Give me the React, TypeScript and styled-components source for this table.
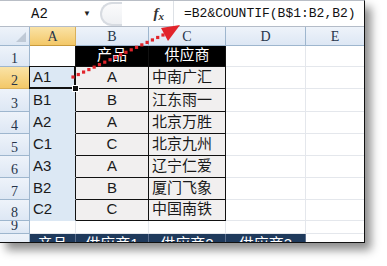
import styled, { createGlobalStyle } from "styled-components";

const GlobalStyle = createGlobalStyle`
  html, body {
    margin: 0;
    padding: 0;
    background: #fff;
  }
  body {
    font-family: "Liberation Sans", "Noto Sans CJK SC", sans-serif;
  }
`;

type Row = { n: number; a: string; b: string; c: string; head?: boolean };

const rows: Row[] = [
  { n: 1, a: "", b: "产品", c: "供应商", head: true },
  { n: 2, a: "A1", b: "A", c: "中南广汇" },
  { n: 3, a: "B1", b: "B", c: "江东雨一" },
  { n: 4, a: "A2", b: "A", c: "北京万胜" },
  { n: 5, a: "C1", b: "C", c: "北京九州" },
  { n: 6, a: "A3", b: "A", c: "辽宁仁爱" },
  { n: 7, a: "B2", b: "B", c: "厦门飞象" },
  { n: 8, a: "C2", b: "C", c: "中国南铁" },
];

const columns = ["A", "B", "C", "D", "E"];
const summary = ["产品", "供应商1", "供应商2", "供应商3"];

// 红色虚线箭头: 从 A2 指向编辑栏
const arrowDots = () => {
  const dots = [];
  const x0 = 73, y0 = 76, x1 = 163, y1 = 34;
  const len = Math.hypot(x1 - x0, y1 - y0);
  const steps = Math.floor(len / 5.6);
  for (let i = 0; i <= steps; i++) {
    const t = i / steps;
    dots.push(
      <rect
        key={i}
        x={x0 + (x1 - x0) * t - 1.6}
        y={y0 + (y1 - y0) * t - 1.6}
        width={3.2}
        height={3.2}
        fill="#e2242b"
      />
    );
  }
  return dots;
};

const App = () => {
  return (
    <Page>
      <GlobalStyle />
      <Window>
        <FormulaBar>
          <NameBox>
            <NameText>A2</NameText>
            <DropArrow>▼</DropArrow>
          </NameBox>
          <Splitter />
          <FxButton>
            <i>f</i>
            <small>x</small>
          </FxButton>
          <FormulaText>=B2&amp;COUNTIF(B$1:B2,B2)</FormulaText>
        </FormulaBar>

        <Sheet>
          <Corner>
            <CornerMark />
          </Corner>
          {columns.map((c) => (
            <ColHead key={c} $active={c === "A"}>
              {c}
            </ColHead>
          ))}

          {rows.map((r) => (
            <RowGroup key={r.n} row={r} />
          ))}

          <RowHead $active={false}>9</RowHead>
          <Cell $tone="blank" />
          <Cell $tone="blank" />
          <Cell $tone="blank" />
          <Cell $tone="blank" />
          <Cell $tone="blank" />

          <RowHead $active={false}>10</RowHead>
          {summary.map((s) => (
            <Cell key={s} $tone="navy" $align="center">
              {s}
            </Cell>
          ))}
          <Cell $tone="blank" />
        </Sheet>

        <Overlay viewBox="0 0 366 244">
          {arrowDots()}
          <polygon points="180,24 161,27 168,40" fill="#e2242b" />
        </Overlay>
      </Window>
    </Page>
  );
};

const RowGroup = ({ row }: { row: Row }) => {
  const selected = row.n === 2;
  return (
    <>
      <RowHead $active={selected}>{row.n}</RowHead>
      <Cell
        $tone={row.n === 1 ? "blank" : "key"}
        $edge
        $selected={selected}
      >
        {row.a}
      </Cell>
      <Cell $tone={row.head ? "head" : "data"} $align="center">
        {row.b}
      </Cell>
      <Cell $tone={row.head ? "head" : "data"} $align={row.head ? "center" : "left"}>
        {row.c}
      </Cell>
      <Cell $tone="blank" />
      <Cell $tone="blank" />
    </>
  );
};

export default App;

const Page = styled.div`
  width: 387px;
  height: 266px;
  background: #fff;
  overflow: hidden;
`;

const Window = styled.div`
  position: relative;
  width: 365px;
  height: 243px;
  border-top: 1px solid #b9bec6;
  border-right: 1px solid #111;
  border-bottom: 1px solid #111;
  box-sizing: border-box;
  background: #fff;
  overflow: hidden;
  box-shadow: 6px 7px 9px rgba(0, 0, 0, 0.45);
`;

const FormulaBar = styled.div`
  height: 25px;
  display: flex;
  align-items: center;
  border-bottom: 1px solid #b4bcc8;
  background: #fff;
`;

const NameBox = styled.div`
  width: 96px;
  height: 100%;
  display: flex;
  align-items: center;
  padding-left: 31px;
  box-sizing: border-box;
`;

const NameText = styled.span`
  font-family: "Liberation Mono", monospace;
  font-size: 14px;
  color: #111;
  flex: 1;
`;

const DropArrow = styled.span`
  font-size: 8px;
  color: #222;
  margin-right: 5px;
`;

const Splitter = styled.div`
  width: 20px;
  height: 20px;
  margin-left: 4px;
  border: 2px solid #d7dbe1;
  border-right: none;
  border-radius: 12px 0 0 12px;
  background: linear-gradient(#fbfbfc, #eef0f3);
`;

const FxButton = styled.div`
  width: 52px;
  height: 100%;
  display: flex;
  align-items: center;
  justify-content: flex-end;
  padding-right: 9px;
  box-sizing: border-box;
  border-right: 1px solid #dde1e6;
  font-family: "Liberation Serif", serif;
  font-weight: bold;
  color: #333;

  i {
    font-size: 15px;
  }
  small {
    font-size: 11px;
    font-style: italic;
    margin-top: 4px;
  }
`;

const FormulaText = styled.div`
  padding-left: 10px;
  font-family: "Liberation Mono", monospace;
  font-size: 13px;
  color: #111;
  white-space: nowrap;
`;

const Sheet = styled.div`
  display: grid;
  grid-template-columns: 30px 46px 73px 77px 80px 59px;
  grid-template-rows: 19px 21px 22px 23px 22px 22px 22px 22px 21px 13px 22px;
`;

const headBg = "linear-gradient(#eef3fa, #dde7f4)";
const activeBg = "linear-gradient(#fae3a6, #f3c868)";

const Corner = styled.div`
  position: relative;
  background: ${headBg};
  border-right: 1px solid #9eb6ce;
  border-bottom: 1px solid #9eb6ce;
`;

const CornerMark = styled.div`
  position: absolute;
  right: 3px;
  bottom: 3px;
  width: 0;
  height: 0;
  border-left: 10px solid transparent;
  border-bottom: 10px solid #bfc9d6;
`;

const ColHead = styled.div<{ $active: boolean }>`
  display: flex;
  align-items: center;
  justify-content: center;
  padding-top: 2px;
  box-sizing: border-box;
  background: ${(p) => (p.$active ? activeBg : headBg)};
  border-right: 1px solid ${(p) => (p.$active ? "#d9b05a" : "#9eb6ce")};
  border-bottom: 1px solid ${(p) => (p.$active ? "#c89a3c" : "#9eb6ce")};
  font-family: "Liberation Serif", serif;
  font-size: 14px;
  color: #27354a;
`;

const RowHead = styled.div<{ $active: boolean }>`
  display: flex;
  align-items: flex-end;
  justify-content: center;
  padding-bottom: 1px;
  box-sizing: border-box;
  background: ${(p) => (p.$active ? activeBg : headBg)};
  border-right: 1px solid ${(p) => (p.$active ? "#c89a3c" : "#9eb6ce")};
  border-bottom: 1px solid ${(p) => (p.$active ? "#d9b05a" : "#9eb6ce")};
  font-family: "Liberation Serif", serif;
  font-size: 14px;
  line-height: 12px;
  color: #27354a;
  overflow: hidden;
`;

type Tone = "blank" | "key" | "data" | "head" | "navy";

const toneBg: Record<Tone, string> = {
  blank: "#fff",
  key: "#dce8f4",
  data: "#f1efef",
  head: "#000",
  navy: "#1f3a5c",
};

const toneLine: Record<Tone, string> = {
  blank: "#e4e7ec",
  key: "#dce8f4",
  data: "#111",
  head: "#111",
  navy: "#5b6f8e",
};

const Cell = styled.div<{
  $tone: Tone;
  $align?: "left" | "center";
  $edge?: boolean;
  $selected?: boolean;
}>`
  position: relative;
  display: flex;
  align-items: flex-end;
  justify-content: ${(p) => (p.$align === "center" ? "center" : "flex-start")};
  padding: 0 0 2px ${(p) => (p.$align === "center" ? "0" : "3px")};
  box-sizing: border-box;
  background: ${(p) => toneBg[p.$tone]};
  border-right: 1px solid ${(p) => (p.$edge ? "#111" : toneLine[p.$tone])};
  border-bottom: 1px solid ${(p) => toneLine[p.$tone]};
  font-size: 15px;
  line-height: 18px;
  color: ${(p) => (p.$tone === "head" || p.$tone === "navy" ? "#fff" : "#1a1a1a")};
  white-space: nowrap;

  ${(p) =>
    p.$selected &&
    `
    &::after {
      content: "";
      position: absolute;
      left: -1px;
      top: -1px;
      right: -1px;
      bottom: -1px;
      border: 2px solid #111;
      border-top-width: 1px;
      border-left-width: 1px;
      pointer-events: none;
    }
    &::before {
      content: "";
      position: absolute;
      right: -4px;
      bottom: -4px;
      width: 5px;
      height: 5px;
      background: #111;
      border: 1px solid #fff;
      z-index: 2;
    }
  `}
`;

const Overlay = styled.svg`
  position: absolute;
  left: 0;
  top: 0;
  width: 366px;
  height: 244px;
  pointer-events: none;
`;
